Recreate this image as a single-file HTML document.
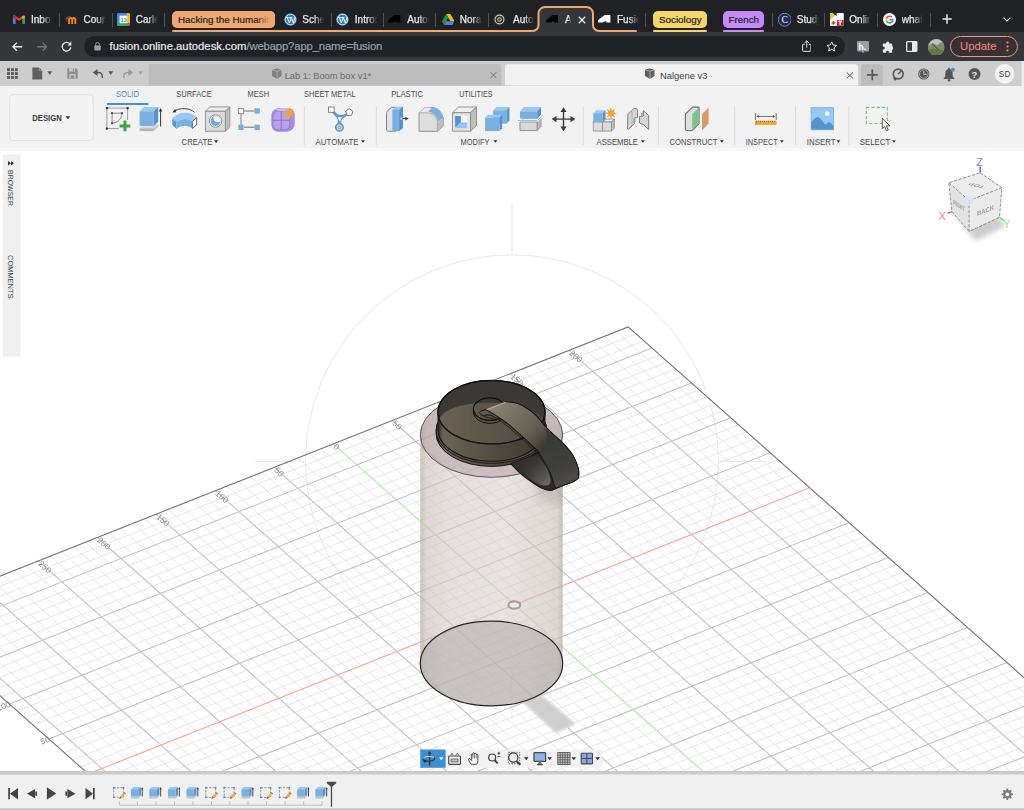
<!DOCTYPE html>
<html lang="en"><head><meta charset="utf-8"><title>Fusion 360 - Nalgene v3</title>
<style>
html,body{margin:0;padding:0;width:1024px;height:810px;overflow:hidden;background:#fff;font-family:"Liberation Sans",sans-serif;}
*{box-sizing:border-box;}
.abs{position:absolute;}
#tabs{position:absolute;left:0;top:0;width:1024px;height:32px;background:#202124;}
#tbar{position:absolute;left:0;top:32px;width:1024px;height:28.900px;background:#35363a;}
#appbar{position:absolute;left:0;top:60.900px;width:1021.500px;height:24.700px;background:#cdcdcd;}
#ribbon{position:absolute;left:0;top:85.600px;width:1024px;height:62.400px;background:#f2f2f2;}
#canvas{position:absolute;left:0;top:149px;width:1024px;height:622px;background:#fff;overflow:hidden;}

.tab{-webkit-text-stroke:.25px #e8eaed;position:absolute;top:0;height:32px;color:#e8eaed;font-size:10px;line-height:39px;white-space:nowrap;overflow:hidden;-webkit-mask-image:linear-gradient(90deg,#000 55%,transparent 100%);mask-image:linear-gradient(90deg,#000 55%,transparent 100%);}
.tsep{position:absolute;top:12.500px;width:1px;height:14px;background:#4d5054;}
.chip{-webkit-text-stroke:.2px #202124;position:absolute;top:10.800px;height:17.200px;border-radius:5px;font-size:9.800px;line-height:17.500px;color:#202124;text-align:center;white-space:nowrap;overflow:hidden;}
.rtab{position:absolute;top:4px;font-size:8.5px;color:#4a4a4a;letter-spacing:-0.2px;white-space:nowrap;transform:translateX(-50%);}
.rlab{position:absolute;top:50px;font-size:8.5px;color:#4a4a4a;letter-spacing:-0.2px;white-space:nowrap;transform:translateX(-50%);}
.rlab:after{content:"";display:inline-block;margin-left:3px;border-left:2.5px solid transparent;border-right:2.5px solid transparent;border-top:3.5px solid #333;vertical-align:middle;position:relative;top:-1px;}
.rsep{position:absolute;top:19px;width:1px;height:39px;background:#dcdcdc;}
.gmin{stroke:#e7e7e7;stroke-width:1;fill:none;}
.gmaj{stroke:#c3c3c3;stroke-width:1.100;fill:none;}
.gedge{stroke:#747474;stroke-width:1.100;fill:none;}
.axr{stroke:#f2a9a3;stroke-width:1.2;fill:none;}
.axg{stroke:#b0eba8;stroke-width:1.2;fill:none;}
.glab{opacity:.99;font-size:8.400px;fill:#8a8a8a;font-family:"Liberation Sans",sans-serif;}
</style></head><body>
<div id="tabs">
 <!-- gmail -->
 <svg class="abs" style="left:13px;top:15px" width="12" height="9" viewBox="0 0 12 9"><path d="M0 1.2V8.2a.8.8 0 0 0 .8.8H2.6V3.6z" fill="#4285f4"/><path d="M12 1.2V8.2a.8.8 0 0 1-.8.8H9.4V3.6z" fill="#34a853"/><path d="M0 1.3A1.2 1.2 0 0 1 2 .4L6 3.5 10 .4A1.2 1.2 0 0 1 12 1.3L9.4 3.6V3.4L6 6 2.6 3.4V3.6z" fill="#ea4335"/><path d="M9.4 1L12 1.3V2.2L9.4 4.3z" fill="#fbbc04"/><path d="M2.6 1L0 1.3V2.2L2.6 4.3z" fill="#c5221f"/></svg>
 <div class="tab" style="left:31px;width:21px">Inbox</div>
 <div class="tsep" style="left:59px"></div>
 <!-- moodle -->
 <svg class="abs" style="left:65px;top:14px" width="13" height="11" viewBox="0 0 13 11"><path d="M4 10V5.6a1.6 1.6 0 0 1 3.2 0V10M7.2 5.6a1.6 1.6 0 0 1 3.2 0V10" fill="none" stroke="#f98012" stroke-width="1.9"/><path d="M0 4.2L4.5 2 6 3 1.5 5.4z" fill="#6b5a45"/><path d="M1.2 5v3" stroke="#6b5a45" stroke-width=".7"/></svg>
 <div class="tab" style="left:83.5px;width:22px">Cours</div>
 <div class="tsep" style="left:111.5px"></div>
 <!-- calendar -->
 <svg class="abs" style="left:117px;top:13px" width="13" height="13" viewBox="0 0 13 13"><rect width="13" height="13" rx="1.6" fill="#4285f4"/><path d="M10 0h1.4A1.6 1.6 0 0 1 13 1.6V10h-3z" fill="#fbbc04"/><path d="M0 10h10v3H1.6A1.6 1.6 0 0 1 0 11.4z" fill="#34a853"/><path d="M10 10h3l-3 3z" fill="#ea4335"/><rect x="2.6" y="2.6" width="7.6" height="7.6" fill="#fff"/><text x="6.4" y="8.7" font-size="6" font-weight="700" text-anchor="middle" fill="#4285f4" font-family="Liberation Sans, sans-serif" letter-spacing="-.4">13</text></svg>
 <div class="tab" style="left:135.8px;width:22px">Carle</div>
 <div class="tsep" style="left:164px"></div>
 <!-- orange group -->
 <div class="chip" style="left:172px;width:103px;background:#f0a871;text-align:left;padding-left:6px">Hacking the Humaniti</div>
 <div class="abs" style="left:256px;top:11px;width:19px;height:17px;border-radius:0 5px 5px 0;background:linear-gradient(90deg,rgba(240,168,113,0),#f0a871 75%)"></div>
 <div class="abs" style="left:172px;top:30px;width:362px;height:2px;background:#f0a871;border-radius:1px 0 0 1px"></div>
 <div class="abs" style="left:598px;top:30px;width:39px;height:2px;background:#f0a871;border-radius:0 1px 1px 0"></div>
 <!-- wordpress 1 -->
 <svg class="abs wp" style="left:283.5px;top:13px" width="13" height="13" viewBox="0 0 13 13"><circle cx="6.5" cy="6.5" r="6.2" fill="#2f7fb5"/><circle cx="6.5" cy="6.5" r="5.3" fill="none" stroke="#fff" stroke-width=".8"/><path d="M2.2 4.4h2.4M3.3 4.4l2.1 5.6 1.2-3.6L5.8 4.4h2.6M7.3 4.4l2 5.6 1.3-4.2c.2-.8-.1-1.4-.5-1.4" fill="none" stroke="#fff" stroke-width="1"/></svg>
 <div class="tab" style="left:302.3px;width:22px">Sched</div>
 <div class="tsep" style="left:330.5px"></div>
 <svg class="abs wp" style="left:336px;top:13px" width="13" height="13" viewBox="0 0 13 13"><circle cx="6.5" cy="6.5" r="6.2" fill="#2f7fb5"/><circle cx="6.5" cy="6.5" r="5.3" fill="none" stroke="#fff" stroke-width=".8"/><path d="M2.2 4.4h2.4M3.3 4.4l2.1 5.6 1.2-3.6L5.8 4.4h2.6M7.3 4.4l2 5.6 1.3-4.2c.2-.8-.1-1.4-.5-1.4" fill="none" stroke="#fff" stroke-width="1"/></svg>
 <div class="tab" style="left:354.8px;width:23px">Intro:</div>
 <div class="tsep" style="left:382.8px"></div>
 <!-- autodesk black -->
 <svg class="abs" style="left:388.300px;top:15.100px" width="12.400" height="7.600" viewBox="0 0 12.400 7.600"><path d="M0 7.600V5.300L6.600 0H12.400V7.600H8.200V5.900L4.700 7.600Z" fill="#000"/></svg>
 <div class="tab" style="left:407.3px;width:22px">Autoc</div>
 <div class="tsep" style="left:435.3px"></div>
 <!-- drive -->
 <svg class="abs" style="left:441.5px;top:14px" width="12.5" height="11" viewBox="0 0 12.5 11"><path d="M4.2 0h4.1l4.2 7.2H8.4z" fill="#fbbc04"/><path d="M4.2 0L0 7.2 2.1 11 6.2 3.6z" fill="#0f9d58"/><path d="M4.2 7.2h8.3L10.4 11H2.1z" fill="#4285f4"/><path d="M4.2 7.2L2.1 11H3.4L5.5 7.2z" fill="#ea4335"/></svg>
 <div class="tab" style="left:459.8px;width:22px">Nora</div>
 <div class="tsep" style="left:487.8px"></div>
 <!-- seal -->
 <svg class="abs" style="left:493px;top:13px" width="13" height="13" viewBox="0 0 13 13"><circle cx="6.5" cy="6.5" r="6.3" fill="#1f2a55"/><circle cx="6.5" cy="6.5" r="4.4" fill="none" stroke="#e9cf6a" stroke-width="1.1"/><circle cx="6.5" cy="6.5" r="2.2" fill="#e9cf6a"/><circle cx="6.5" cy="6.5" r="1.2" fill="#1f2a55"/></svg>
 <div class="tab" style="left:513px;width:21px">Autoc</div>
 <!-- active tab -->
 <svg class="abs" style="left:528px;top:4px" width="76" height="28" viewBox="0 0 76 28"><path d="M4.5 27a6 6 0 0 0 6-6V9.5a6.5 6.5 0 0 1 6.5-6.5H58.5a6.5 6.5 0 0 1 6.500 6.5V21a6 6 0 0 0 6 6V28H4.5z" fill="#35363a"/><path d="M6 27H4.500a6 6 0 0 0 6-6V9.5a6.500 6.500 0 0 1 6.500-6.500H58.500a6.500 6.500 0 0 1 6.500 6.500V21a6 6 0 0 0 6 6H70" fill="none" stroke="#f0a871" stroke-width="2"/></svg>
 <svg class="abs" style="left:545.800px;top:15.100px" width="12.400" height="7.600" viewBox="0 0 12.400 7.600"><path d="M0 7.600V5.300L6.600 0H12.400V7.600H8.200V5.900L4.700 7.600Z" fill="#000"/></svg>
 <div class="tab" style="left:565px;width:6px">A</div>
 <svg class="abs" style="left:577.500px;top:15.500px" width="8" height="8" viewBox="0 0 8 8"><path d="M.8.800L7.200 7.200M7.200.800L.8 7.200" stroke="#e8eaed" stroke-width="1.300"/></svg>
 <!-- fusion tab -->
 <svg class="abs" style="left:598.300px;top:15.100px" width="12.400" height="7.600" viewBox="0 0 12.400 7.600"><path d="M0 7.600V5.300L6.600 0H12.400V7.600H8.200V5.900L4.700 7.600Z" fill="#fff"/></svg>
 <div class="tab" style="left:617px;width:22px">Fusio</div>
 <div class="tsep" style="left:645.300px"></div>
 <div class="chip" style="left:653.300px;width:54px;background:#f6d56c">Sociology</div>
 <div class="abs" style="left:653.300px;top:30px;width:54px;height:2px;background:#f6d56c;border-radius:1px"></div>
 <div class="chip" style="left:723.300px;width:41px;background:#c48af5">French</div>
 <div class="abs" style="left:723.300px;top:30px;width:41px;height:2px;background:#c48af5;border-radius:1px"></div>
 <div class="tsep" style="left:772.300px"></div>
 <!-- C -->
 <svg class="abs" style="left:777.500px;top:13px" width="13.500" height="13.500" viewBox="0 0 14 14"><circle cx="7" cy="7" r="6.700" fill="#1c2a5e" stroke="#c9cfe6" stroke-width=".6"/><text x="7" y="10.300" font-size="10" text-anchor="middle" fill="#fff" font-family="Liberation Serif, serif">C</text></svg>
 <div class="tab" style="left:796.800px;width:22px">Study</div>
 <div class="tsep" style="left:824.300px"></div>
 <!-- flag -->
 <svg class="abs" style="left:830px;top:13px" width="13.500" height="13" viewBox="0 0 14 13"><rect width="14" height="13" fill="#fff"/><path d="M0 0H7L0 7z" fill="#f3c125"/><path d="M7 0L0 7V0z" fill="#f3c125"/><path d="M3 0h4v3z" fill="#000"/><rect x="7" y="0" width="7" height="7" fill="#fff"/><path d="M7 7h7v6H7z" fill="#c8252c"/><path d="M0 7h7v6H0z" fill="#fff"/><path d="M8.500 8.500h4M10.500 7.500v4.500" stroke="#fff" stroke-width="1.400"/><path d="M1.500 10h4M3.500 8v4" stroke="#c8252c" stroke-width="1.400"/></svg>
 <div class="tab" style="left:849.300px;width:22px">Onlin</div>
 <div class="tsep" style="left:877.300px"></div>
 <!-- google -->
 <svg class="abs" style="left:883px;top:13px" width="13" height="13" viewBox="0 0 13 13"><circle cx="6.500" cy="6.500" r="6.500" fill="#fff"/><path d="M10.600 6.600c0-.3 0-.6-.1-.9H6.600v1.700h2.200c-.1.500-.4 1-.8 1.300v1.100h1.300c.8-.7 1.300-1.800 1.300-3.200z" fill="#4285f4"/><path d="M6.600 10.700c1.100 0 2-.4 2.700-1l-1.300-1c-.4.200-.8.400-1.400.4-1.100 0-2-.7-2.300-1.700H2.900v1.100c.7 1.300 2.100 2.200 3.700 2.200z" fill="#34a853"/><path d="M4.300 7.400c-.1-.3-.1-.5-.1-.8s0-.6.100-.8V4.700H2.900c-.3.600-.4 1.200-.4 1.900s.2 1.300.4 1.900z" fill="#fbbc04"/><path d="M6.600 4.100c.6 0 1.100.2 1.600.6l1.200-1.200c-.7-.7-1.700-1.100-2.800-1.100-1.600 0-3 .9-3.700 2.300l1.400 1.100c.3-1 1.200-1.700 2.300-1.700z" fill="#ea4335"/></svg>
 <div class="tab" style="left:901.800px;width:21px">what</div>
 <div class="tsep" style="left:929.800px"></div>
 <svg class="abs" style="left:942px;top:13.500px" width="10" height="10" viewBox="0 0 10 10"><path d="M5 .3V9.700M.3 5H9.700" stroke="#e8eaed" stroke-width="1.500"/></svg>
 <svg class="abs" style="left:1003px;top:16.500px" width="8" height="5" viewBox="0 0 8 5"><path d="M.6.600L4 4 7.400.600" fill="none" stroke="#e8eaed" stroke-width="1.200"/></svg>
</div>
<div id="tbar">
 <!-- back / forward / reload -->
 <svg class="abs" style="left:12px;top:9.500px" width="10.500" height="9.500" viewBox="0 0 10.500 9.500"><path d="M10.200 4.750H1M4.900.700L.9 4.750 4.900 8.800" fill="none" stroke="#e8eaed" stroke-width="1.300"/></svg>
 <svg class="abs" style="left:36.700px;top:9.500px" width="10.500" height="9.500" viewBox="0 0 10.500 9.500"><path d="M.3 4.750H9.500M5.600.700L9.600 4.750 5.600 8.800" fill="none" stroke="#73767b" stroke-width="1.300"/></svg>
 <svg class="abs" style="left:61px;top:9px" width="11" height="11" viewBox="0 0 11 11"><path d="M9.300 3.600A4.300 4.300 0 1 0 9.800 6.400" fill="none" stroke="#e8eaed" stroke-width="1.300"/><path d="M10.300.600V4.400H6.500z" fill="#e8eaed"/></svg>
 <div class="abs" style="left:83.500px;top:3.700px;width:761.500px;height:21px;border-radius:10.500px;background:#202124"></div>
 <!-- lock -->
 <svg class="abs" style="left:93.700px;top:10.200px" width="7" height="8.600" viewBox="0 0 7 8.600"><path d="M1.600 3.800V2.500a1.900 1.900 0 0 1 3.800 0V3.800" fill="none" stroke="#9aa0a6" stroke-width="1"/><rect x=".3" y="3.600" width="6.400" height="4.800" rx=".7" fill="#9aa0a6"/></svg>
 <div id="url" class="abs" style="-webkit-text-stroke:.2px;left:109.500px;top:3.700px;height:21px;line-height:21.500px;font-size:11.300px;color:#e8eaed;white-space:nowrap">fusion.online.autodesk.com<span style="color:#9aa0a6;letter-spacing:-.145px">/webapp?app_name=fusion</span></div>
 <!-- share -->
 <svg class="abs" style="left:801.500px;top:8.300px" width="9.500" height="12" viewBox="0 0 9.500 12"><path d="M2.800 4.300H1.300a.7.700 0 0 0-.7.700V10.600a.7.700 0 0 0 .7.700H8.200a.7.700 0 0 0 .7-.7V5a.7.700 0 0 0-.7-.7H6.700M4.750 7.600V.9M2.600 2.900L4.750.800 6.900 2.900" fill="none" stroke="#e8eaed" stroke-width="1"/></svg>
 <!-- star -->
 <svg class="abs" style="left:825.700px;top:8.700px" width="11.400" height="11" viewBox="0 0 11.400 11"><path d="M5.700.900L7.150 4 10.500 4.400 8 6.700 8.700 10 5.700 8.300 2.700 10 3.400 6.700.9 4.400 4.250 4z" fill="none" stroke="#e8eaed" stroke-width="1" stroke-linejoin="round"/></svg>
 <!-- h. -->
 <svg class="abs" style="left:856.500px;top:8.500px" width="12" height="13" viewBox="0 0 12 13"><path d="M1.200 0H10.800A1.200 1.200 0 0 1 12 1.200V9.300a1.200 1.200 0 0 1-1.200 1.200H7.300L6 12.500 4.700 10.500H1.200A1.200 1.200 0 0 1 0 9.300V1.200A1.200 1.200 0 0 1 1.200 0z" fill="#9a9da2"/><text x="5.300" y="8.600" font-size="8.500" font-weight="700" text-anchor="middle" fill="#fff" font-family="Liberation Sans, sans-serif">h.</text></svg>
 <!-- puzzle -->
 <svg class="abs" style="left:881.500px;top:8.500px" width="11.500" height="12" viewBox="0 0 11.500 12"><path d="M4.200 1.900a1.500 1.500 0 0 1 3 0V2.600H9.300a.8.800 0 0 1 .8.800V5.500h.3a1.500 1.500 0 0 1 0 3H10.100v2.400a.8.800 0 0 1-.8.800H6.900v-.5a1.400 1.400 0 0 0-2.800 0v.5H1.600a.8.800 0 0 1-.8-.800V8.600h.5a1.500 1.500 0 0 0 0-3H.8V3.400a.8.800 0 0 1 .8-.800H4.200z" fill="#e8eaed"/></svg>
 <!-- side panel -->
 <svg class="abs" style="left:906px;top:9px" width="11.500" height="11" viewBox="0 0 11.500 11"><rect x=".65" y=".65" width="10.200" height="9.700" rx=".8" fill="none" stroke="#e8eaed" stroke-width="1.300"/><rect x="6" y=".65" width="4.850" height="9.700" fill="#e8eaed"/></svg>
 <!-- avatar -->
 <svg class="abs" style="left:928px;top:6.500px" width="16.500" height="16.500" viewBox="0 0 16.500 16.500"><defs><clipPath id="avc"><circle cx="8.250" cy="8.250" r="8.250"/></clipPath></defs><g clip-path="url(#avc)"><rect width="16.500" height="16.500" fill="#b9c3c9"/><path d="M0 7L5 4 9 6.500 13 3 16.500 5V16.500H0z" fill="#7f8f6c"/><path d="M0 10.500C4 9 10 9.500 16.500 11.500V16.500H0z" fill="#5f7a3a"/><path d="M4 5L11 11" stroke="#6b5a4a" stroke-width="1.200"/></g></svg>
 <!-- update -->
 <div class="abs" style="left:950px;top:3.700px;width:67.500px;height:21.300px;border-radius:10.700px;border:1px solid #e8988e;background:#3a3032"></div>
 <div class="abs" style="left:960px;top:3.700px;height:21.300px;line-height:21.500px;font-size:11.300px;color:#f28b82;white-space:nowrap">Update</div>
 <svg class="abs" style="left:1005.500px;top:9px" width="3" height="11" viewBox="0 0 3 11"><circle cx="1.500" cy="1.500" r="1.100" fill="#f28b82"/><circle cx="1.500" cy="5.500" r="1.100" fill="#f28b82"/><circle cx="1.500" cy="9.500" r="1.100" fill="#f28b82"/></svg>
</div>
<div id="appbar"></div>
<div id="ribbon"></div>
<svg class="abs" style="left:0;top:61px;font-family:'Liberation Sans',sans-serif" width="1024" height="90" viewBox="0 61 1024 90">
<rect x="1021.500" y="60.900" width="2.500" height="24.700" fill="#ececec"/>
<rect x="7.1" y="68.2" width="2.900" height="2.900" fill="#5a5a5a"/>
<rect x="7.1" y="72.1" width="2.900" height="2.900" fill="#5a5a5a"/>
<rect x="7.1" y="76.0" width="2.900" height="2.900" fill="#5a5a5a"/>
<rect x="11.0" y="68.2" width="2.900" height="2.900" fill="#5a5a5a"/>
<rect x="11.0" y="72.1" width="2.900" height="2.900" fill="#5a5a5a"/>
<rect x="11.0" y="76.0" width="2.900" height="2.900" fill="#5a5a5a"/>
<rect x="14.9" y="68.2" width="2.900" height="2.900" fill="#5a5a5a"/>
<rect x="14.9" y="72.1" width="2.900" height="2.900" fill="#5a5a5a"/>
<rect x="14.9" y="76.0" width="2.900" height="2.900" fill="#5a5a5a"/>
<path d="M32.400 67.600H39.200L42.200 70.700V79.500H32.400Z" fill="#5f5f5f"/><path d="M39.200 67.600V70.700H42.200" fill="none" stroke="#cdcdcd" stroke-width=".6"/>
<path d="M47.300 71.300H52.300L49.800 74.900Z" fill="#5a5a5a"/>
<path d="M67.300 68.200H76.200L77.700 69.700V78.700H67.300Z" fill="#8d8d8d"/><rect x="69.300" y="68.200" width="5.800" height="3.300" fill="#cdcdcd"/><rect x="72.800" y="68.800" width="1.400" height="2.100" fill="#8d8d8d"/><rect x="69.500" y="74" width="6" height="4.700" fill="#cdcdcd"/><rect x="70.700" y="75.300" width="3.600" height="3.400" fill="#8d8d8d"/>
<path d="M94.200 72.500H98.500C101.500 72.500 102.600 74.500 102.300 78" fill="none" stroke="#555" stroke-width="1.400"/><path d="M92.800 72.500L97.500 69V76Z" fill="#555"/>
<path d="M108.300 71.300H113.300L110.800 74.900Z" fill="#555"/>
<path d="M131.500 72.500H127.700C124.700 72.500 123.600 74.500 123.900 78" fill="none" stroke="#999" stroke-width="1.400"/><path d="M133.100 72.500L128.400 69V76Z" fill="#999"/>
<path d="M138.300 71.300H143L140.650 74.900Z" fill="#a0a0a0"/>
<path d="M148.600 85.600V66.400A2.500 2.500 0 0 1 151.100 63.900H498.800A2.500 2.500 0 0 1 501.300 66.400V85.600Z" fill="#bdbdbd"/>
<path d="M272 69.800L276.500 68.500L281.500 69.800V76L277 79L272 76Z" fill="#808080"/><path d="M272 69.800L277 71.200L281.500 69.800M277 71.200V79" fill="none" stroke="#c9c9c9" stroke-width=".6"/>
<text x="284.700" y="78.500" textLength="86.500" lengthAdjust="spacingAndGlyphs" font-size="9.300" fill="#6a6a6a">Lab 1: Boom box v1*</text>
<path d="M490.500 72.200L496.300 78M496.300 72.200L490.500 78" stroke="#777" stroke-width="1" fill="none"/>
<path d="M505 85.600V66.800A2.500 2.500 0 0 1 507.500 64.300H855.700A2.500 2.500 0 0 1 858.200 66.800V85.600Z" fill="#f2f2f2"/>
<path d="M645 69.800L649.500 68.500L654.500 69.800V76L650 79L645 76Z" fill="#606060"/><path d="M645 69.800L650 71.200L654.500 69.800M650 71.200V79" fill="none" stroke="#d8d8d8" stroke-width=".6"/>
<text x="660" y="78.500" textLength="47.500" lengthAdjust="spacingAndGlyphs" font-size="9.300" fill="#3d3d3d">Nalgene v3</text>
<path d="M846.700 72.300L853.100 78.500M853.100 72.300L846.700 78.500" stroke="#555" stroke-width="1" fill="none"/>
<path d="M861.100 85.600V66.800A2.500 2.500 0 0 1 863.600 64.300H880.100A2.500 2.500 0 0 1 882.600 66.800V85.600Z" fill="#bcbcbc"/><path d="M872.300 69.500V80.200M867 74.850H877.700" stroke="#555" stroke-width="1.700"/>
<circle cx="898.200" cy="74" r="4.900" fill="none" stroke="#555" stroke-width="1.700"/><path d="M898.200 74L901.800 70.200" stroke="#555" stroke-width="1.500"/><path d="M893 77.500L897.500 78.500L894.800 81Z" fill="#555"/>
<circle cx="923.800" cy="74" r="5.600" fill="#555"/><circle cx="923.800" cy="74" r="4.300" fill="#555" stroke="#cdcdcd" stroke-width=".7"/><path d="M923.800 71V74.300H926.500" fill="none" stroke="#cdcdcd" stroke-width="1"/>
<path d="M949 69C946.500 69 945.300 71 945.300 73.500V76.500L943.700 78.300V79H954.300V78.300L952.700 76.500V73.500C952.700 71 951.500 69 949 69Z" fill="#555"/><circle cx="949" cy="80.300" r="1.200" fill="#555"/><circle cx="949" cy="68.500" r=".9" fill="#555"/><circle cx="952.900" cy="69.800" r="2" fill="#3b93d3"/>
<circle cx="974.500" cy="74" r="6" fill="#555"/><text x="974.500" y="77.500" font-size="9.500" font-weight="700" text-anchor="middle" fill="#ececec">?</text>
<circle cx="1004.700" cy="73.900" r="9.800" fill="#f4f4f4"/><text x="1004.700" y="76.900" font-size="8.200" text-anchor="middle" fill="#444" letter-spacing=".3">SD</text>
<rect x="0" y="148" width="1024" height="3.200" fill="#f9f9f9"/>
<text x="116.0" y="97.4" textLength="23.0" lengthAdjust="spacingAndGlyphs" font-size="8.2" fill="#3f97d6">SOLID</text>
<rect x="106.8" y="103.100" width="41.600" height="1.900" rx=".6" fill="#3b93d3"/>
<text x="176.2" y="97.4" textLength="35.5" lengthAdjust="spacingAndGlyphs" font-size="8.2" fill="#4b4b4b">SURFACE</text>
<text x="247.5" y="97.4" textLength="21.5" lengthAdjust="spacingAndGlyphs" font-size="8.2" fill="#4b4b4b">MESH</text>
<text x="303.9" y="97.4" textLength="51.8" lengthAdjust="spacingAndGlyphs" font-size="8.2" fill="#4b4b4b">SHEET METAL</text>
<text x="391.2" y="97.4" textLength="31.8" lengthAdjust="spacingAndGlyphs" font-size="8.2" fill="#4b4b4b">PLASTIC</text>
<text x="459.2" y="97.4" textLength="33.2" lengthAdjust="spacingAndGlyphs" font-size="8.2" fill="#4b4b4b">UTILITIES</text>
<text x="181.6" y="144.6" textLength="30.7" lengthAdjust="spacingAndGlyphs" font-size="8.2" fill="#4b4b4b">CREATE</text>
<path d="M213.9 140.3H218.2L216.1 143.0Z" fill="#333"/>
<text x="315.6" y="144.6" textLength="43.0" lengthAdjust="spacingAndGlyphs" font-size="8.2" fill="#4b4b4b">AUTOMATE</text>
<path d="M361.0 140.3H365.0L363.0 142.8Z" fill="#333"/>
<text x="460.5" y="144.6" textLength="29.0" lengthAdjust="spacingAndGlyphs" font-size="8.2" fill="#4b4b4b">MODIFY</text>
<path d="M493.4 140.3H497.3L495.4 142.7Z" fill="#333"/>
<text x="596.6" y="144.6" textLength="41.4" lengthAdjust="spacingAndGlyphs" font-size="8.2" fill="#4b4b4b">ASSEMBLE</text>
<path d="M640.9 140.3H644.8L642.8 142.7Z" fill="#333"/>
<text x="669.5" y="144.6" textLength="47.9" lengthAdjust="spacingAndGlyphs" font-size="8.2" fill="#4b4b4b">CONSTRUCT</text>
<path d="M719.9 140.3H723.8L721.8 142.7Z" fill="#333"/>
<text x="745.7" y="144.6" textLength="32.2" lengthAdjust="spacingAndGlyphs" font-size="8.2" fill="#4b4b4b">INSPECT</text>
<path d="M779.9 140.3H783.8L781.8 142.7Z" fill="#333"/>
<text x="806.8" y="144.6" textLength="28.7" lengthAdjust="spacingAndGlyphs" font-size="8.2" fill="#4b4b4b">INSERT</text>
<path d="M836.5 140.3H840.4L838.5 142.7Z" fill="#333"/>
<text x="859.7" y="144.6" textLength="30.7" lengthAdjust="spacingAndGlyphs" font-size="8.2" fill="#4b4b4b">SELECT</text>
<path d="M892.0 140.3H895.9L894.0 142.7Z" fill="#333"/>
<rect x="303.8" y="106.500" width="1.100" height="38.500" fill="#dedede"/>
<rect x="375.8" y="106.500" width="1.100" height="38.500" fill="#dedede"/>
<rect x="582.8" y="106.500" width="1.100" height="38.500" fill="#dedede"/>
<rect x="657.9" y="106.500" width="1.100" height="38.500" fill="#dedede"/>
<rect x="734.1" y="106.500" width="1.100" height="38.500" fill="#dedede"/>
<rect x="795.0" y="106.500" width="1.100" height="38.500" fill="#dedede"/>
<rect x="848.3" y="106.500" width="1.100" height="38.500" fill="#dedede"/>
<rect x="9.700" y="94.600" width="83.500" height="46" rx="3.500" fill="#f3f3f3" stroke="#e1e1e1" stroke-width="1"/>
<text x="32.3" y="120.8" textLength="29.4" lengthAdjust="spacingAndGlyphs" font-size="8.2" fill="#3a3a3a" font-weight="700">DESIGN</text>
<path d="M65.5 116.3H70.3L67.9 119.3Z" fill="#333"/>
<path d="M106.900 108.050H127.600M106.900 108.050V128.600M127.600 108.050V120M106.900 128.600H119" stroke="#9b9b9b" stroke-width="1" fill="none"/>
<rect x="105.8" y="107.0" width="2.200" height="2.200" fill="#3c3c3c"/>
<rect x="126.5" y="107.0" width="2.200" height="2.200" fill="#3c3c3c"/>
<rect x="105.8" y="127.5" width="2.200" height="2.200" fill="#3c3c3c"/>
<path d="M112.100 113.200H122M112.100 113.200V123.300M122 113.200C121.500 119 118 122.800 112.100 123.300" stroke="#8a8a8a" stroke-width="1" fill="none"/>
<rect x="111.1" y="112.2" width="1.900" height="1.900" fill="#444"/>
<rect x="121.0" y="112.2" width="1.900" height="1.900" fill="#444"/>
<rect x="111.1" y="122.3" width="1.900" height="1.900" fill="#444"/>
<path d="M124.950 120.500V131.300M119.550 125.900H130.350" stroke="#3fa447" stroke-width="3" fill="none"/>
<path d="M139.6 128.3L144.0 124.1L158.2 124.1L153.8 128.3Z" fill="#dadada"/><path d="M153.8 128.3L158.2 124.1L158.2 126.9L153.8 131.1Z" fill="#c4c4c4"/><path d="M139.6 128.3L153.8 128.3L153.8 131.1L139.6 131.1Z" fill="#b4b4b4"/>
<path d="M139.6 111.3L144.0 107.1L158.2 107.1L153.8 111.3Z" fill="#97c9f5"/><path d="M153.8 111.3L158.2 107.1L158.2 121.7L153.8 125.9Z" fill="#5792cb"/><path d="M139.6 111.3L153.8 111.3L153.8 125.9L139.6 125.9Z" fill="#79afe1"/>
<path d="M160.600 110.500V126.400" stroke="#333" stroke-width="1"/><path d="M158.900 111.500L160.600 108L162.300 111.500Z" fill="#333"/>
<path d="M172.300 118.300C178 111.500 190 110.800 196.400 117.200L192.300 121.500C187.500 117.800 181 118.400 176.500 122.600Z" fill="#97c9f5"/>
<path d="M172.300 118.300L176.500 122.600V129L172.300 124.500Z" fill="#5792cb"/>
<path d="M176.500 122.600C181 118.400 187.500 117.800 192.300 121.500V128.300C187.500 124.600 181 125 176.500 129Z" fill="#79afe1"/>
<path d="M192.300 121.500L196.700 117.500V124.800L192.300 128.400Z" fill="#fff" stroke="#555" stroke-width=".9" stroke-linejoin="round"/>
<path d="M194.500 112.300C189 107.500 179.500 107.500 173.500 111.500" fill="none" stroke="#333" stroke-width=".9"/><path d="M172.300 112.500L175.200 108.900L176.300 112.300Z" fill="#333"/>
<path d="M205.4 111.3L209.8 106.9L229.8 106.9L225.4 111.3Z" fill="#ececec" stroke="#8c8c8c" stroke-width="0.9" stroke-linejoin="round"/><path d="M225.4 111.3L229.8 106.9L229.8 126.9L225.4 131.3Z" fill="#bdbdbd" stroke="#8c8c8c" stroke-width="0.9" stroke-linejoin="round"/><path d="M205.4 111.3L225.4 111.3L225.4 131.3L205.4 131.3Z" fill="#dcdcdc" stroke="#8c8c8c" stroke-width="0.9" stroke-linejoin="round"/>
<circle cx="215.600" cy="121" r="6.300" fill="#e9e9e9" stroke="#8f8f8f" stroke-width=".9"/><circle cx="215.600" cy="121" r="4.900" fill="#6ea8de"/><path d="M213.500 116.700A4.900 4.900 0 0 1 220.500 121.500A4.600 4.600 0 0 1 213.500 116.700Z" fill="#fff"/>
<path d="M243.800 111H254.500M241 113.700V124.700M243.800 127.250H254.500" stroke="#9a9a9a" stroke-width="1.300" fill="none"/>
<rect x="238.500" y="108.500" width="5.200" height="5.200" fill="#fff" stroke="#8a8a8a" stroke-width=".9"/>
<rect x="254.5" y="108.3" width="5.300" height="5.300" fill="#70b0e6"/>
<rect x="238.3" y="124.7" width="5.300" height="5.300" fill="#70b0e6"/>
<rect x="254.5" y="124.7" width="5.300" height="5.300" fill="#70b0e6"/>
<path d="M271.300 116C271.300 111 275 108 280 108H287C292 108 294.700 111 294.700 116V124C294.700 128.500 291 131.800 285 131.800H279C274 131.800 271.300 128.500 271.300 124Z" fill="#a78bde"/>
<path d="M273 116.500C273 113 276 110.800 280 110.800H286.500C288.500 110.800 289.700 111.500 289.700 113V126C289.700 128.500 287 129.800 284 129.800H279C275 129.800 273 127.800 273 124.500Z" fill="#b9a1ea" stroke="#8d72c9" stroke-width=".7"/>
<path d="M281.300 111V129.700M273 120.300H289.700" stroke="#8566c4" stroke-width=".8" fill="none"/>
<path d="M275 109.500C279 107.500 288 107.500 291 109L288.500 111H279Z" fill="#cbb9f2"/>
<path d="M289.4 107.0L290.5 110.6L293.8 108.8L292.0 112.1L295.6 113.2L292.0 114.3L293.8 117.6L290.5 115.8L289.4 119.4L288.3 115.8L285.0 117.6L286.8 114.3L283.2 113.2L286.8 112.1L285.0 108.8L288.3 110.6Z" fill="#f0a234"/>
<path d="M331.500 110L339.600 118.800L348.500 113.300M339.600 118.800V125" stroke="#5b9bd5" stroke-width="2.600" fill="none" stroke-linecap="round"/>
<path d="M334 111.500C336 115 343 116 347 113.500L341.300 120V124H337.800V120Z" fill="#5b9bd5"/><path d="M337.600 117.200H342L339.800 121.800Z" fill="#f2f2f2"/>
<rect x="328.500" y="107" width="5.600" height="5.300" fill="#fff" stroke="#7a7a7a" stroke-width=".9"/>
<path d="M349.300 108.600L352.900 111.200L351.500 115.400H347.100L345.700 111.200Z" fill="#fff" stroke="#6a6a6a" stroke-width=".9" stroke-linejoin="round"/>
<circle cx="339.500" cy="127.400" r="3.700" fill="#d5d5d5" stroke="#5b9bd5" stroke-width="1.700"/><circle cx="339.500" cy="127.400" r="1.400" fill="none" stroke="#8a8a8a" stroke-width=".7"/>
<path d="M392.800 131.200H388.200C387 131.200 386.500 130.700 386.500 129.500V113.500C386.500 112 387 111.300 388 110.300L391.500 107.300H396V131.200Z" fill="#e3e3e3" stroke="#7d7d7d" stroke-width="1"/>
<path d="M392.3 109.8L396.2 106.6L403.0 106.6L399.1 109.8Z" fill="#97c9f5"/><path d="M399.1 109.8L403.0 106.6L403.0 127.9L399.1 131.1Z" fill="#5792cb"/><path d="M392.3 109.8L399.1 109.8L399.1 131.1L392.3 131.1Z" fill="#79afe1"/>
<path d="M401.300 118.600H406" stroke="#333" stroke-width="1"/><path d="M405.300 116.800L408.600 118.600L405.300 120.400Z" fill="#333"/><rect x="400.500" y="117.700" width="2" height="1.800" fill="#e8e8e8"/>
<path d="M419.200 112.800L424.500 107.500H433L443.200 117.500V126L437.300 131.200H419.200Z" fill="#dcdcdc" stroke="#888" stroke-width="1" stroke-linejoin="round"/>
<path d="M419.200 112.800L424.500 107.500H431L428 111.300C425 112.300 421 112.800 419.200 112.800Z" fill="#ececec"/>
<path d="M437.300 131.200L443.200 126V118L437.300 122.800Z" fill="#bdbdbd"/>
<path d="M428.200 111.500L433.300 106.900C438.500 108 442.500 112 443.200 117.200L438 121.800C437.500 116.500 434 112.500 428.200 111.500Z" fill="#79afe1"/>
<path d="M419.200 112.800H428C433.500 113.500 437.300 117 437.300 122.800V131.200H419.200Z" fill="#dedede" stroke="#8a8a8a" stroke-width=".6"/>
<path d="M452.5 112.7L458.5 107.0L476.5 107.0L470.5 112.7Z" fill="#efefef" stroke="#8a8a8a" stroke-width="0.9" stroke-linejoin="round"/><path d="M470.5 112.7L476.5 107.0L476.5 125.5L470.5 131.2Z" fill="#bebebe" stroke="#8a8a8a" stroke-width="0.9" stroke-linejoin="round"/><path d="M452.5 112.7L470.5 112.7L470.5 131.2L452.5 131.2Z" fill="#e4e4e4" stroke="#8a8a8a" stroke-width="0.9" stroke-linejoin="round"/>
<rect x="455.100" y="115.700" width="12" height="12.500" fill="#f6f6f6"/>
<path d="M455.100 116.100H460.800V122.500L455.100 127.900Z" fill="#5792cb"/><path d="M455.100 128.200L460.800 122.500H467.100V128.200Z" fill="#8fc4f5"/>
<path d="M493.2 110.3L496.2 107.1L509.4 107.1L506.4 110.3Z" fill="#97c9f5"/><path d="M506.4 110.3L509.4 107.1L509.4 120.5L506.4 123.7Z" fill="#5792cb"/><path d="M493.2 110.3L506.4 110.3L506.4 123.7L493.2 123.7Z" fill="#79afe1"/>
<path d="M485.1 117.6L487.7 114.7L502.1 114.7L499.5 117.6Z" fill="#97c9f5"/><path d="M499.5 117.6L502.1 114.7L502.1 128.2L499.5 131.1Z" fill="#5792cb"/><path d="M485.1 117.6L499.5 117.6L499.5 131.1L485.1 131.1Z" fill="#79afe1"/>
<path d="M520.0 122.0L523.9 118.0L541.0 118.0L537.1 122.0Z" fill="#e6e6e6" stroke="#8a8a8a" stroke-width="0.9" stroke-linejoin="round"/><path d="M537.1 122.0L541.0 118.0L541.0 126.5L537.1 130.5Z" fill="#bcbcbc" stroke="#8a8a8a" stroke-width="0.9" stroke-linejoin="round"/><path d="M520.0 122.0L537.1 122.0L537.1 130.5L520.0 130.5Z" fill="#d9d9d9" stroke="#8a8a8a" stroke-width="0.9" stroke-linejoin="round"/>
<path d="M520.0 111.3L523.9 107.1L541.0 107.1L537.1 111.3Z" fill="#97c9f5"/><path d="M537.1 111.3L541.0 107.1L541.0 114.4L537.1 118.6Z" fill="#5792cb"/><path d="M520.0 111.3L537.1 111.3L537.1 118.6L520.0 118.6Z" fill="#79afe1"/>
<path d="M518 120.500H537.600L542.500 115.200" fill="none" stroke="#fff" stroke-width="2.200"/><path d="M518 120.500H537.600L542.500 115.200" fill="none" stroke="#8ec3f2" stroke-width="1"/>
<path d="M563.500 110V128.500M554.500 119.100H572.500" stroke="#3a3a3a" stroke-width="1.400"/>
<path d="M563.500 107.300L566.600 112H560.400ZM563.500 131.200L566.600 126.400H560.400ZM551.700 119.100L556.500 116V122.200ZM575.300 119.100L570.500 116V122.200Z" fill="#3a3a3a"/>
<path d="M593.3 122.0L596.2 119.1L605.5 119.1L602.6 122.0Z" fill="#ececec" stroke="#8a8a8a" stroke-width="0.8" stroke-linejoin="round"/><path d="M602.6 122.0L605.5 119.1L605.5 128.2L602.6 131.1Z" fill="#bdbdbd" stroke="#8a8a8a" stroke-width="0.8" stroke-linejoin="round"/><path d="M593.3 122.0L602.6 122.0L602.6 131.1L593.3 131.1Z" fill="#dcdcdc" stroke="#8a8a8a" stroke-width="0.8" stroke-linejoin="round"/>
<path d="M602.6 122.0L605.5 119.1L614.3 119.1L611.4 122.0Z" fill="#ececec" stroke="#8a8a8a" stroke-width="0.8" stroke-linejoin="round"/><path d="M611.4 122.0L614.3 119.1L614.3 128.2L611.4 131.1Z" fill="#bdbdbd" stroke="#8a8a8a" stroke-width="0.8" stroke-linejoin="round"/><path d="M602.6 122.0L611.4 122.0L611.4 131.1L602.6 131.1Z" fill="#dcdcdc" stroke="#8a8a8a" stroke-width="0.8" stroke-linejoin="round"/>
<path d="M593.3 113.2L596.2 110.3L605.5 110.3L602.6 113.2Z" fill="#97c9f5"/><path d="M602.6 113.2L605.5 110.3L605.5 119.1L602.6 122.0Z" fill="#5792cb"/><path d="M593.3 113.2L602.6 113.2L602.6 122.0L593.3 122.0Z" fill="#79afe1"/>
<path d="M610.9 106.9L611.9 110.7L615.4 108.7L613.4 112.2L617.2 113.2L613.4 114.2L615.4 117.7L611.9 115.7L610.9 119.5L609.9 115.7L606.4 117.7L608.4 114.2L604.6 113.2L608.4 112.2L606.4 108.7L609.9 110.7Z" fill="#f0a234"/>
<path d="M627.900 114.500L633.500 108.800C635 107.800 637.600 108.500 637.600 110.500V117.500L634.200 118V124L628.300 129.300C627.800 129.500 627.500 129 627.500 128.500Z" fill="#d6d6d6" stroke="#7d7d7d" stroke-width="1" stroke-linejoin="round"/>
<path d="M632 112V126" stroke="#a5a5a5" stroke-width=".8"/><rect x="633.800" y="118.500" width="1.800" height="3.500" fill="#79afe1"/>
<path d="M643.300 110.500L648.700 115.500V129.500L643.300 124.500L639.500 123V116.500L643.300 116Z" fill="#d6d6d6" stroke="#7d7d7d" stroke-width="1" stroke-linejoin="round"/><rect x="641" y="113.200" width="1.800" height="4" fill="#79afe1"/>
<path d="M685.400 114.200L692.700 107.100H699V123.500L692.200 130.500H686.600C685.800 130.500 685.400 130 685.400 129.300Z" fill="#e0e0e0" stroke="#6b6b6b" stroke-width="1.100" stroke-linejoin="round"/>
<path d="M692.200 114.200L699 107.400V123.500L692.200 130.300Z" fill="#7cc48a"/>
<path d="M702 114.200L708.600 107.400V123.500L702 130.300Z" fill="#d89a68"/>
<rect x="755" y="120.800" width="21.500" height="4.200" fill="#f0a830"/><path d="M756.500 120.800v1.500M758.500 120.800v1M760.500 120.800v1.500M762.500 120.800v1M764.500 120.800v1.500M766.500 120.800v1M768.500 120.800v1.500M770.500 120.800v1M772.500 120.800v1.500M774.500 120.800v1" stroke="#6b4a10" stroke-width=".7"/>
<path d="M755.400 113.200V120M776.200 113.200V120M757 116.450H774.500" stroke="#666" stroke-width=".9"/><path d="M756.200 116.450L758.700 115.200V117.700ZM775.400 116.450L772.900 115.200V117.700Z" fill="#444"/>
<rect x="811.100" y="107.700" width="22.500" height="22.100" fill="#94c8f6" stroke="#74afe6" stroke-width=".8"/>
<path d="M811.300 122.200C813.500 119.500 815.800 117 817.900 117C820.500 117.500 823 122.500 825.700 124.800C827 124 828 122 829.200 122C830.800 122.500 832 124.500 833.400 126V129.600H811.300Z" fill="#5593c9"/>
<circle cx="827.200" cy="113.700" r="2.400" fill="#fbf7c6"/>
<rect x="866.300" y="107.400" width="21" height="16.100" fill="none" stroke="#7dc67f" stroke-width="1.200" stroke-dasharray="3.300 1.900"/>
<path d="M882.300 118.100V128.700L884.700 126.500L886.500 130.700L888.200 130L886.400 125.900H889.800Z" fill="#fff" stroke="#333" stroke-width=".8" stroke-linejoin="round"/>
</svg>
<div id="canvas">
<svg class="abs" style="left:0;top:-149px;font-family:'Liberation Sans',sans-serif" width="1024" height="810" viewBox="0 0 1024 810">
<g stroke="#e9e9e9" stroke-width="1" fill="none"><circle cx="512" cy="461.4" r="206.5"/><path d="M512 203V254.9M512 667.9V719M255 461.4H305.5M718.5 461.4H769"/></g>
<path class="gmin" d="M413.5 1029.4L-67.8 603.1M425.3 1024.8L-56.0 598.4M437.0 1020.1L-44.2 593.7M448.8 1015.4L-32.4 589.0M472.4 1006.0L-8.9 579.7M484.2 1001.4L2.9 575.0M496.0 996.7L14.7 570.3M507.8 992.0L26.5 565.6M531.4 982.6L50.1 556.2M543.2 978.0L61.9 551.6M555.0 973.3L73.7 546.9M566.8 968.6L85.5 542.2M590.4 959.2L109.1 532.9M602.2 954.6L120.9 528.2M614.0 949.9L132.7 523.5M625.8 945.2L144.5 518.8M649.4 935.8L168.1 509.5M661.2 931.2L179.9 504.8M673.0 926.5L191.7 500.1M684.8 921.8L203.5 495.4M708.4 912.4L227.1 486.1M720.2 907.8L238.9 481.4M731.9 903.1L250.7 476.7M743.7 898.4L262.5 472.0M767.3 889.0L286.0 462.7M779.1 884.4L297.8 458.0M790.9 879.7L309.6 453.3M802.7 875.0L321.4 448.6M826.3 865.6L345.0 439.3M838.1 861.0L356.8 434.6M849.9 856.3L368.6 429.9M861.7 851.6L380.4 425.2M885.3 842.2L404.0 415.9M897.1 837.6L415.8 411.2M908.9 832.9L427.6 406.5M920.7 828.2L439.4 401.8M944.3 818.8L463.0 392.5M956.1 814.2L474.8 387.8M967.9 809.5L486.6 383.1M979.7 804.8L498.4 378.4M1003.3 795.4L522.0 369.1M1015.1 790.8L533.8 364.4M1026.8 786.1L545.6 359.7M1038.6 781.4L557.4 355.0M1062.2 772.0L580.9 345.7M1074.0 767.4L592.7 341.0M1085.8 762.7L604.5 336.3M1097.6 758.0L616.3 331.6M388.1 1039.5L1109.4 753.3M380.2 1032.5L1101.5 746.3M372.3 1025.5L1093.6 739.3M356.5 1011.5L1077.9 725.4M348.6 1004.6L1070.0 718.4M340.8 997.6L1062.1 711.4M332.9 990.6L1054.2 704.4M317.1 976.6L1038.4 690.4M309.2 969.6L1030.5 683.4M301.3 962.6L1022.6 676.4M293.4 955.6L1014.7 669.4M277.6 941.6L999.0 655.5M269.7 934.7L991.1 648.5M261.9 927.7L983.2 641.5M254.0 920.7L975.3 634.5M238.2 906.7L959.5 620.5M230.3 899.7L951.6 613.5M222.4 892.7L943.7 606.5M214.5 885.7L935.8 599.5M198.7 871.7L920.1 585.6M190.8 864.8L912.2 578.6M183.0 857.8L904.3 571.6M175.1 850.8L896.4 564.6M159.3 836.8L880.6 550.6M151.4 829.8L872.7 543.6M143.5 822.8L864.8 536.6M135.6 815.8L856.9 529.6M119.8 801.8L841.2 515.7M111.9 794.9L833.3 508.7M104.1 787.9L825.4 501.7M96.2 780.9L817.5 494.7M80.4 766.9L801.7 480.7M72.5 759.9L793.8 473.7M64.6 752.9L785.9 466.7M56.7 745.9L778.0 459.7M40.9 731.9L762.3 445.8M33.0 725.0L754.4 438.8M25.2 718.0L746.5 431.8M17.3 711.0L738.6 424.8M1.5 697.0L722.8 410.8M-6.4 690.0L714.9 403.8M-14.3 683.0L707.0 396.8M-22.2 676.0L699.1 389.8M-38.0 662.0L683.4 375.9M-45.9 655.1L675.5 368.9M-53.7 648.1L667.6 361.9M-61.6 641.1L659.7 354.9M-77.4 627.1L643.9 340.9M-85.3 620.1L636.0 333.9"/>
<path class="gmaj" d="M401.7 1034.1L-79.6 607.7M460.6 1010.7L-20.6 584.3M519.6 987.3L38.3 560.9M578.6 963.9L97.3 537.5M637.6 940.5L156.3 514.1M696.6 917.1L215.3 490.7M755.5 893.7L274.2 467.3M873.5 846.9L392.2 420.5M932.5 823.5L451.2 397.1M991.5 800.1L510.2 373.7M1050.4 776.7L569.1 350.3M364.4 1018.5L1085.8 732.4M325.0 983.6L1046.3 697.4M285.5 948.6L1006.9 662.5M246.1 913.7L967.4 627.5M206.6 878.7L928.0 592.6M167.2 843.8L888.5 557.6M127.7 808.8L849.1 522.7M48.8 738.9L770.1 452.8M9.4 704.0L730.7 417.8M-30.1 669.0L691.2 382.9M-69.5 634.1L651.8 347.9"/>
<path class="axr" d="M88.3 773.9L809.6 487.7"/>
<path class="axg" d="M814.5 870.3L333.2 443.9"/>
<path class="gedge" d="M388.1 1039.5 L1109.4 753.3 L628.1 326.9 L-93.2 613.1 Z"/>
<text class="glab" dy="2.900" transform="translate(-78.1 609.1) rotate(41.5)">350</text><text class="glab" dy="2.900" transform="translate(-19.2 585.7) rotate(41.5)">300</text><text class="glab" dy="2.900" transform="translate(39.8 562.3) rotate(41.5)">250</text><text class="glab" dy="2.900" transform="translate(98.8 538.9) rotate(41.5)">200</text><text class="glab" dy="2.900" transform="translate(157.8 515.5) rotate(41.5)">150</text><text class="glab" dy="2.900" transform="translate(216.8 492.1) rotate(41.5)">100</text><text class="glab" dy="2.900" transform="translate(275.7 468.7) rotate(41.5)">50</text><text class="glab" dy="2.900" transform="translate(334.7 445.3) rotate(41.5)">0</text><text class="glab" dy="2.900" transform="translate(393.7 421.9) rotate(41.5)">50</text><text class="glab" dy="2.900" transform="translate(452.7 398.5) rotate(41.5)">100</text><text class="glab" dy="2.900" transform="translate(511.7 375.1) rotate(41.5)">150</text><text class="glab" dy="2.900" transform="translate(570.6 351.7) rotate(41.5)">200</text><text class="glab" dy="2.900" text-anchor="end" transform="translate(365.0 1018.3) rotate(-21.6)">350</text><text class="glab" dy="2.900" text-anchor="end" transform="translate(325.6 983.3) rotate(-21.6)">300</text><text class="glab" dy="2.900" text-anchor="end" transform="translate(286.1 948.4) rotate(-21.6)">250</text><text class="glab" dy="2.900" text-anchor="end" transform="translate(246.7 913.4) rotate(-21.6)">200</text><text class="glab" dy="2.900" text-anchor="end" transform="translate(207.2 878.5) rotate(-21.6)">150</text><text class="glab" dy="2.900" text-anchor="end" transform="translate(167.8 843.5) rotate(-21.6)">100</text><text class="glab" dy="2.900" text-anchor="end" transform="translate(128.3 808.6) rotate(-21.6)">50</text><text class="glab" dy="2.900" text-anchor="end" transform="translate(88.9 773.6) rotate(-21.6)">0</text><text class="glab" dy="2.900" text-anchor="end" transform="translate(49.4 738.7) rotate(-21.6)">50</text><text class="glab" dy="2.900" text-anchor="end" transform="translate(10.0 703.7) rotate(-21.6)">100</text><text class="glab" dy="2.900" text-anchor="end" transform="translate(-29.5 668.8) rotate(-21.6)">150</text><text class="glab" dy="2.900" text-anchor="end" transform="translate(-68.9 633.8) rotate(-21.6)">200</text>
<defs>
<linearGradient id="bodyg" x1="420" x2="563" y1="0" y2="0" gradientUnits="userSpaceOnUse">
<stop offset="0" stop-color="#b5aa9d" stop-opacity=".72"/><stop offset=".045" stop-color="#c9beb7" stop-opacity=".62"/>
<stop offset=".2" stop-color="#d2c7c4" stop-opacity=".56"/><stop offset=".6" stop-color="#d6cbc9" stop-opacity=".54"/>
<stop offset=".955" stop-color="#c9beb7" stop-opacity=".62"/><stop offset="1" stop-color="#b5aa9d" stop-opacity=".72"/></linearGradient>
<clipPath id="bodyclip"><rect x="420.300" y="430" width="142.400" height="240"/></clipPath>
<filter id="blur4"><feGaussianBlur stdDeviation="5"/></filter>
<linearGradient id="wallg" x1="438" x2="545" y1="0" y2="0" gradientUnits="userSpaceOnUse">
<stop offset="0" stop-color="#2e2c26"/><stop offset=".05" stop-color="#6a6455"/><stop offset=".35" stop-color="#5a5446"/>
<stop offset=".7" stop-color="#4a4539"/><stop offset="1" stop-color="#37342c"/></linearGradient>
<linearGradient id="floorg" x1="440" x2="545" y1="0" y2="0" gradientUnits="userSpaceOnUse">
<stop offset="0" stop-color="#6a6354"/><stop offset=".5" stop-color="#5b5447"/><stop offset="1" stop-color="#4d473c"/></linearGradient>
<linearGradient id="strapg" x1="500" y1="405" x2="548" y2="445" gradientUnits="userSpaceOnUse">
<stop offset="0" stop-color="#8d8879"/><stop offset=".45" stop-color="#79746400"/><stop offset=".45" stop-color="#797464"/>
<stop offset=".8" stop-color="#676152"/><stop offset="1" stop-color="#4a463d"/></linearGradient>
<linearGradient id="sinng" x1="518" y1="458" x2="548" y2="484" gradientUnits="userSpaceOnUse">
<stop offset="0" stop-color="#2c2b29"/><stop offset=".45" stop-color="#3b3a37"/><stop offset=".8" stop-color="#56554f"/><stop offset="1" stop-color="#6c6b64"/></linearGradient>
<clipPath id="rimclip"><ellipse cx="491.5" cy="412.2" rx="53.4" ry="31.6"/></clipPath>
<filter id="blur1"><feGaussianBlur stdDeviation="0.7"/></filter>
<filter id="blur2"><feGaussianBlur stdDeviation="1.6"/></filter>
</defs>
<path d="M521.3 700.7L542 695.5L575.7 724L556.3 733.1Z" fill="#cfcfcf" filter="url(#blur2)"/>
<path fill="url(#bodyg)" d="M420.3 435L420.3 663.5A71.2 42.3 0 0 0 562.7 663.5L562.7 435A71.2 42.3 0 0 0 420.3 435Z"/>
<ellipse class="b" fill="#aeaaa8" fill-opacity=".55" stroke="#262626" stroke-width="1.2" cx="491.5" cy="663.5" rx="71.2" ry="42.3"/>
<ellipse class="s" fill="#ab9199" fill-opacity=".44" stroke="#3b3b3b" stroke-width=".8" cx="491.5" cy="435.0" rx="71.2" ry="42.3"/>
<g clip-path="url(#bodyclip)"><path d="M530 470L566 462L568 505L540 500Z" fill="#8f8783" opacity=".28" filter="url(#blur4)"/></g>
<path class="c" fill="url(#wallg)" stroke="#141414" stroke-width="1" d="M436.1 430.6L436.1 433.6A55.4 32.8 0 0 0 546.9 433.6L546.9 430.6A55.4 32.8 0 0 0 436.1 430.6Z"/>
<ellipse class="c" fill="#585243" stroke="#141414" stroke-width=".9" cx="491.5" cy="430.6" rx="55.4" ry="32.8"/>
<path class="c" fill="url(#wallg)" stroke="#141414" stroke-width="1.1" d="M438.1 412.2L438.1 429.6A53.4 31.7 0 0 0 544.9 429.6L544.9 412.2A53.4 31.7 0 0 0 438.1 412.2Z"/>
<ellipse class="c" fill="#3a3936" stroke="#141414" stroke-width="1.2" cx="491.5" cy="412.2" rx="53.4" ry="31.7"/>
<g clip-path="url(#rimclip)"><path fill="url(#floorg)" filter="url(#blur1)" d="M434.0 424.0C434.8 423.1 437.0 420.3 439.0 418.3C441.0 416.3 443.4 413.6 446.0 411.8C448.6 410.0 451.4 408.5 454.4 407.4C457.4 406.3 460.7 405.6 464.0 405.0C467.3 404.4 469.7 403.9 474.0 403.5C478.3 403.1 484.0 402.6 490.0 402.7C496.0 402.8 503.3 403.0 510.0 404.2C516.7 405.4 523.7 407.2 530.0 410.0C536.3 412.8 545.0 419.2 548.0 421.0L550 450L430 450Z"/></g>
<ellipse class="c" fill="none" stroke="#141414" stroke-width="1.3" cx="491.5" cy="412.2" rx="53.4" ry="31.7"/>
<path fill="#5d5648" stroke="#111" stroke-width="1" d="M473.4 409.1A16.4 11.2 0 0 0 500.5 417.6L501.3 420.0A16.4 11.2 0 0 1 473.4 411.4Z"/>
<ellipse cx="489.8" cy="409.1" rx="16.4" ry="11.2" fill="none" stroke="#111" stroke-width="1.100"/>
<path fill="#625c4e" stroke="#111" stroke-width="1" stroke-linejoin="round" d="M486.0 409.6C485.3 409.8 483.1 410.2 482.0 410.6C480.9 411.0 479.6 411.6 479.4 412.2C479.2 412.8 480.4 413.8 481.0 414.4C481.6 415.0 482.4 415.9 483.2 416.0C483.9 416.1 484.3 415.2 485.5 415.1C486.7 415.0 488.5 414.7 490.2 415.1C491.9 415.6 493.9 416.9 495.5 417.8C497.1 418.7 499.3 420.2 500.1 420.7L494 411Z"/>
<path fill="none" stroke="#111" stroke-width=".9" d="M484.3 416.8C485.3 417.0 488.1 417.3 490.2 417.9C492.2 418.5 495.5 419.9 496.6 420.3"/>
<path fill="#2a2a28" stroke="#141414" stroke-width="1.100" stroke-linejoin="round" d="M535.4 414.8C537.1 416.8 542.5 423.5 545.8 427.0C549.1 430.5 551.9 433.1 555.0 436.0C558.1 438.9 561.4 441.4 564.4 444.7C567.4 448.0 570.8 452.0 573.0 455.6C575.2 459.2 576.7 463.6 577.7 466.6C578.7 469.6 578.8 471.7 578.8 473.6C578.8 475.6 578.8 477.0 578.0 478.3C577.2 479.6 576.1 480.2 573.8 481.4C571.4 482.6 566.6 484.1 563.6 485.3C560.6 486.5 557.8 487.6 555.8 488.4C553.8 489.2 553.3 489.9 551.9 490.2C550.5 490.5 549.3 490.6 547.2 490.0C545.1 489.4 542.1 488.3 539.4 486.9C536.7 485.5 533.9 483.6 530.8 481.4C527.7 479.2 523.9 476.5 520.6 473.6C517.3 470.7 512.5 465.4 510.9 463.8L531.600 456L538.600 452Z"/>
<path fill="url(#sinng)" d="M537.8 456.4C539.1 458.0 543.6 462.7 545.6 465.8C547.6 468.9 548.7 472.5 549.5 475.2C550.3 477.9 550.7 480.5 550.3 482.2C549.9 483.9 549.0 484.9 547.2 485.3C545.4 485.7 542.5 485.8 539.4 484.5C536.3 483.2 532.4 480.5 528.4 477.5C524.4 474.5 518.0 468.9 515.2 466.6C512.4 464.3 512.2 464.1 511.6 463.6L531.600 456.200Z"/>
<path fill="url(#soutg)" stroke="#141414" stroke-width="1" stroke-linejoin="round" d="M535.4 414.8C537.1 416.8 542.5 423.5 545.8 427.0C549.1 430.5 551.9 433.1 555.0 436.0C558.1 438.9 561.4 441.4 564.4 444.7C567.4 448.0 570.8 452.0 573.0 455.6C575.2 459.2 576.7 463.6 577.7 466.6C578.7 469.6 578.8 471.7 578.8 473.6C578.8 475.6 578.8 477.0 578.0 478.3C577.2 479.6 576.1 480.2 573.8 481.4C571.4 482.6 566.6 484.1 563.6 485.3C560.6 486.5 557.1 487.9 555.8 488.4L555.8 488.4C555.7 488.1 555.3 487.7 555.0 486.9C554.7 486.1 554.3 485.3 553.8 483.8C553.3 482.2 552.7 479.8 551.9 477.5C551.1 475.2 550.3 472.8 548.8 469.7C547.2 466.6 544.2 461.7 542.5 458.8C540.8 455.8 539.2 453.1 538.6 452.0Z"/>
<defs><linearGradient id="soutg" x1="548" y1="440" x2="572" y2="488" gradientUnits="userSpaceOnUse">
<stop offset="0" stop-color="#393937"/><stop offset=".55" stop-color="#3f3f3c"/><stop offset=".85" stop-color="#4b4a46"/><stop offset="1" stop-color="#3a3a37"/></linearGradient></defs>
<path fill="url(#strapg2)" d="M485.2 409.6C486.8 408.9 491.6 406.9 495.0 405.6C498.4 404.3 502.3 402.2 505.4 401.7C508.4 401.2 510.5 401.8 513.3 402.4C516.1 403.0 518.7 403.5 522.4 405.6C526.1 407.7 531.5 411.2 535.4 414.8C539.3 418.4 544.1 425.0 545.8 427.0C546.0 429.1 547.7 434.6 547.3 437.8C546.9 441.1 545.0 444.5 543.6 446.9C542.2 449.3 539.4 451.1 538.6 452.0C535.9 449.4 527.2 441.0 522.4 436.6C517.6 432.2 513.5 428.5 510.0 425.6C506.5 422.7 503.7 421.0 501.3 419.3C498.9 417.6 497.4 416.6 495.5 415.4C493.6 414.2 491.9 413.2 490.2 412.2C488.5 411.2 486.0 410.0 485.2 409.6Z"/>
<path fill="none" stroke="#141414" stroke-width="1.1" d="M505.4 401.7C506.7 401.8 510.5 401.8 513.3 402.4C516.1 403.0 518.7 403.5 522.4 405.6C526.1 407.7 531.5 411.2 535.4 414.8C539.3 418.4 544.1 425.0 545.8 427.0"/>
<path fill="none" stroke="#aeab9e" stroke-width="1.100" stroke-linecap="round" filter="url(#blur1)" d="M486.200 409.900L505 402.700"/>
<path fill="none" stroke="#141414" stroke-width="1.1" d="M538.6 452.0C535.9 449.4 527.2 441.0 522.4 436.6C517.6 432.2 513.5 428.5 510.0 425.6C506.5 422.7 503.7 421.0 501.3 419.3C498.9 417.6 497.4 416.6 495.5 415.4C493.6 414.2 491.9 413.2 490.2 412.2C488.5 411.2 486.0 410.0 485.2 409.6"/>
<path fill="none" stroke="#141414" stroke-width=".8" d="M537.4 453.6C534.7 451.0 526.0 442.6 521.2 438.2C516.4 433.8 512.3 430.1 508.8 427.2C505.3 424.3 501.6 422.0 500.1 420.9"/>
<defs><linearGradient id="strapg2" x1="492" y1="400" x2="546" y2="447" gradientUnits="userSpaceOnUse">
<stop offset="0" stop-color="#979282"/><stop offset=".12" stop-color="#857f6e"/><stop offset=".3" stop-color="#7a7564"/><stop offset=".62" stop-color="#6b6556"/>
<stop offset=".8" stop-color="#5a5549"/><stop offset=".93" stop-color="#403e39"/><stop offset="1" stop-color="#393937"/></linearGradient></defs>
<ellipse cx="514.3" cy="605" rx="5.900" ry="3.700" fill="#fff" fill-opacity=".5" stroke="#a5a1a0" stroke-width="2.200"/>
<rect x="0" y="147" width="1024" height="4.200" fill="#f9f9f9"/>
<rect x="2.700" y="154.500" width="17.700" height="202" fill="#f0f0f0"/>
<path d="M8 161L11 163.200L8 165.400ZM11 161L14 163.200L11 165.400Z" fill="#333"/>
<text transform="translate(8.300 170) rotate(90)" textLength="36" lengthAdjust="spacingAndGlyphs" font-size="7.400" fill="#444">BROWSER</text>
<text transform="translate(8.300 255) rotate(90)" textLength="43.500" lengthAdjust="spacingAndGlyphs" font-size="7.400" fill="#444">COMMENTS</text>
<defs><filter id="vcb"><feGaussianBlur stdDeviation="2.400"/></filter><filter id="vct"><feGaussianBlur stdDeviation=".35"/></filter></defs>
<path d="M960 220L975 241L1006 226L992 210Z" fill="#c4c4c4" filter="url(#vcb)" opacity=".85"/>
<path d="M980.2 172.8L1001.9 187.7L969.1 200.6L948.8 182.7Z" fill="#ededed"/>
<path d="M948.8 182.7L969.1 200.6L969.1 231.5L951.9 211.7Z" fill="#e3e3e3"/>
<path d="M969.1 200.6L1001.9 187.7L999.4 217.3L969.1 231.5Z" fill="#ebebeb"/>
<path d="M980.2 172.8L1001.9 187.7L999.4 217.3L969.1 231.5L951.9 211.7L948.8 182.7Z M948.8 182.7L969.1 200.6M1001.9 187.7L969.1 200.6M969.1 200.6L969.1 231.5" fill="none" stroke="#858585" stroke-width=".9" stroke-dasharray="3.200 1.500"/>
<path d="M965.500 197.500L969.500 195.500L974.500 198.500L974 203.500L969.100 206L965 203Z" fill="#dfe3ee" opacity=".8"/>
<g filter="url(#vct)" font-weight="700" fill="#9a9ca3">
<text transform="matrix(-.95 -.25 .62 -.42 985.500 186.300)" font-size="7.400" textLength="15.500" lengthAdjust="spacingAndGlyphs">TOP</text>
<text transform="matrix(.92 -.36 0 1 977 216)" font-size="6.600" textLength="18.500" lengthAdjust="spacingAndGlyphs">BACK</text>
<text transform="matrix(.78 .52 0 1 953.300 204)" font-size="6.600" textLength="14.500" lengthAdjust="spacingAndGlyphs">RIGHT</text>
</g>
<path d="M980.200 166.500V172.800" stroke="#6f6fe6" stroke-width="1.600"/><text x="976.300" y="165.800" font-size="11" fill="#7d7df0">Z</text>
<path d="M947.500 213.300L952 211.700" stroke="#e86a6a" stroke-width="1.600"/><text x="938.700" y="219.500" font-size="10.500" fill="#f08585">X</text>
<path d="M999.400 217.500L1004.500 221" stroke="#7fe07f" stroke-width="1.600"/><text x="1003.300" y="227.500" font-size="10.500" fill="#8fe88f">Y</text>
<rect x="420.250" y="749.500" width="182.250" height="18.300" fill="#f1f1f1" fill-opacity=".96"/>
<rect x="420.250" y="749.500" width="25.350" height="18.300" fill="#3c8fd3"/>
<path d="M429.600 752V765.500" stroke="#3a3a3a" stroke-width="1.600"/><path d="M427.600 753.800L429.600 751L431.600 753.800Z" fill="#3a3a3a"/>
<path d="M433.500 757C435.500 758.500 434.500 760.800 429.600 761.200C425.500 761.500 422.800 760.300 423.300 758.600" fill="none" stroke="#3a3a3a" stroke-width="1.300"/><path d="M423 760.500L426.500 759.500L425 763Z" fill="#222"/>
<path d="M423.500 757.800C425 756.300 432 756 434 757.500" fill="none" stroke="#c9d9ea" stroke-width="1"/>
<path d="M439.0 757.2H443.6L441.3 760.2Z" fill="#fff"/>
<rect x="448.700" y="756" width="11.700" height="8.300" rx=".8" fill="#f1f1f1" stroke="#4a4a4a" stroke-width="1.200"/><rect x="451" y="759" width="7" height="3" fill="#bbb" stroke="#555" stroke-width=".7"/>
<path d="M450.300 755.500L452 753.300L453.600 755.500M455.500 755.500L457.200 753.300L458.800 755.500" fill="none" stroke="#555" stroke-width=".9"/>
<path d="M471.300 764.300C469.800 762.500 468.800 760.500 468.400 759.300C468.700 758.300 470 758.500 470.500 759.500L471.300 760.500V754.800C471.300 753.600 472.900 753.600 472.900 754.800V753.700C472.900 752.500 474.600 752.500 474.600 753.700V754.200C474.600 753 476.300 753 476.300 754.200V755.200C476.300 754.100 477.900 754.100 477.900 755.200V760.500C477.900 762.500 477.300 763.500 476.500 764.300Z" fill="#fafafa" stroke="#3a3a3a" stroke-width=".9" stroke-linejoin="round"/><path d="M472.900 755V758.500M474.600 754.500V758.500M476.300 755.500V758.500" stroke="#3a3a3a" stroke-width=".7"/>
<circle cx="492.200" cy="757.500" r="3.500" fill="#e9eef2" stroke="#3a3a3a" stroke-width="1.200"/><path d="M494.800 760.300L497.600 763.400" stroke="#3a3a3a" stroke-width="1.900"/><path d="M497.300 753.300H500.300M498.800 751.800V754.800M497.300 756.600H500.300" stroke="#3a3a3a" stroke-width=".9"/>
<rect x="508.300" y="752.300" width="11.400" height="11.500" fill="none" stroke="#555" stroke-width=".9" stroke-dasharray="1.500 1.200"/><circle cx="513.300" cy="757.500" r="4.600" fill="#e9eef2" stroke="#3a3a3a" stroke-width="1.200"/><path d="M516.600 761.100L520.300 764.800" stroke="#3a3a3a" stroke-width="2"/>
<path d="M524.0 757.2H528.6L526.3 760.2Z" fill="#333"/>
<rect x="534" y="752.700" width="11.600" height="8.600" rx=".8" fill="#8fb4e6" stroke="#4a4a4a" stroke-width="1.300"/><path d="M538 763.800H541.800M537 764.600H542.800" stroke="#4a4a4a" stroke-width="1.100"/><rect x="538.800" y="761.500" width="2.200" height="2.300" fill="#777"/>
<path d="M547.4 757.2H552.0L549.7 760.2Z" fill="#333"/>
<rect x="557.800" y="752.600" width="12.200" height="12" fill="#c9c9c9" stroke="#555" stroke-width=".9"/><path d="M560.200 752.600V764.600M562.700 752.600V764.600M565.100 752.600V764.600M567.600 752.600V764.600M557.800 755V755H570M557.800 757.400H570M557.800 759.800H570M557.800 762.200H570" stroke="#555" stroke-width=".8"/>
<path d="M571.5 757.2H576.1L573.8 760.2Z" fill="#333"/>
<rect x="581.200" y="753.200" width="11.300" height="10.700" rx=".6" fill="#8ea5d2" stroke="#3f4a66" stroke-width="1.100"/><path d="M586.850 753.200V763.900M581.200 758.500H592.500" stroke="#3f4a66" stroke-width="1"/>
<path d="M595.3 757.2H599.9L597.6 760.2Z" fill="#333"/>
</svg>
</div>
<svg class="abs" style="left:0;top:771px;font-family:'Liberation Sans',sans-serif" width="1024" height="39" viewBox="0 771 1024 39">
<rect x="0" y="771" width="1024" height="39" fill="#f0f0f0"/>
<rect x="0" y="771" width="1024" height="3.400" fill="#cacaca"/><rect x="0" y="774" width="102.500" height="1" fill="#d4d4d4"/>
<rect x="0" y="808.400" width="1024" height="1.600" fill="#bdbdbd"/>
<path d="M8.200 788H9.900V799.300H8.200ZM18 788V799.300L9.900 793.650Z" fill="#444"/>
<path d="M35 789V798.300L27 793.650ZM35.300 791.500H37V795.800H35.300Z" fill="#444"/>
<path d="M46.900 787.200V799.800L56.300 793.500Z" fill="#444"/>
<path d="M67.400 789V798.300L75.400 793.650ZM65.400 791.500H67.100V795.800H65.400Z" fill="#444"/>
<path d="M93 788H94.700V799.300H93ZM85.500 788V799.300L93 793.650Z" fill="#444"/>
<path d="M119.500 805.200H322.600M119.4 805.200V801.300M137.4 805.200V801.300M155.9 805.200V801.300M174.5 805.200V801.300M193.0 805.200V801.300M211.5 805.200V801.300M229.9 805.200V801.300M248.0 805.200V801.300M266.5 805.200V801.300M285.1 805.200V801.300M303.7 805.200V801.300M321.9 805.200V801.300" fill="none" stroke="#bdbdbd" stroke-width="1"/>
<rect x="113.7" y="787.700" width="9.800" height="9.600" fill="none" stroke="#8a8a8a" stroke-width=".9" stroke-dasharray="2.200 1.200"/>
<rect x="112.9" y="786.9" width="1.600" height="1.600" fill="#3b8fe0"/>
<rect x="122.7" y="786.9" width="1.600" height="1.600" fill="#3b8fe0"/>
<rect x="112.9" y="796.5" width="1.600" height="1.600" fill="#3b8fe0"/>
<path d="M120.1 796.200L123.5 792.800L125.2 794.500L121.8 797.900Z" fill="#f0b43c"/>
<path d="M123.5 792.800L124.3 792L126.0 793.700L125.2 794.500Z" fill="#e8504a"/>
<path d="M120.1 796.200L121.8 797.900L119.2 798.900Z" fill="#6a6a6a"/>
<path d="M130.9 796.500H138.5L140.9 794.500V796L138.5 798.600H130.9Z" fill="#c4c4c4"/>
<path d="M130.9 789.200L133.3 787H140.9L138.5 789.200Z" fill="#97c9f5"/>
<path d="M138.5 789.200L140.9 787V794.500L138.5 796.500Z" fill="#5792cb"/>
<rect x="130.9" y="789.200" width="7.600" height="7.300" fill="#79afe1"/>
<path d="M142.2 788.500V796.500" stroke="#333" stroke-width=".9"/><path d="M141.2 789.300L142.2 787L143.2 789.300Z" fill="#333"/>
<path d="M149.4 796.500H157.0L159.4 794.500V796L157.0 798.600H149.4Z" fill="#c4c4c4"/>
<path d="M149.4 789.200L151.8 787H159.4L157.0 789.200Z" fill="#97c9f5"/>
<path d="M157.0 789.200L159.4 787V794.500L157.0 796.500Z" fill="#5792cb"/>
<rect x="149.4" y="789.200" width="7.600" height="7.300" fill="#79afe1"/>
<path d="M160.7 788.500V796.500" stroke="#333" stroke-width=".9"/><path d="M159.7 789.300L160.7 787L161.7 789.300Z" fill="#333"/>
<path d="M168.0 796.500H175.6L178.0 794.500V796L175.6 798.600H168.0Z" fill="#c4c4c4"/>
<path d="M168.0 789.200L170.4 787H178.0L175.6 789.200Z" fill="#97c9f5"/>
<path d="M175.6 789.200L178.0 787V794.500L175.6 796.500Z" fill="#5792cb"/>
<rect x="168.0" y="789.200" width="7.600" height="7.300" fill="#79afe1"/>
<path d="M179.3 788.500V796.500" stroke="#333" stroke-width=".9"/><path d="M178.3 789.300L179.3 787L180.3 789.300Z" fill="#333"/>
<path d="M186.5 796.500H194.1L196.5 794.500V796L194.1 798.600H186.5Z" fill="#c4c4c4"/>
<path d="M186.5 789.200L188.9 787H196.5L194.1 789.200Z" fill="#97c9f5"/>
<path d="M194.1 789.200L196.5 787V794.500L194.1 796.500Z" fill="#5792cb"/>
<rect x="186.5" y="789.200" width="7.600" height="7.300" fill="#79afe1"/>
<path d="M197.8 788.500V796.500" stroke="#333" stroke-width=".9"/><path d="M196.8 789.300L197.8 787L198.8 789.300Z" fill="#333"/>
<rect x="205.8" y="787.700" width="9.800" height="9.600" fill="none" stroke="#8a8a8a" stroke-width=".9" stroke-dasharray="2.200 1.200"/>
<rect x="205.0" y="786.9" width="1.600" height="1.600" fill="#3b8fe0"/>
<rect x="214.8" y="786.9" width="1.600" height="1.600" fill="#3b8fe0"/>
<rect x="205.0" y="796.5" width="1.600" height="1.600" fill="#3b8fe0"/>
<path d="M212.2 796.200L215.6 792.800L217.3 794.500L213.9 797.900Z" fill="#f0b43c"/>
<path d="M215.6 792.800L216.4 792L218.1 793.700L217.3 794.500Z" fill="#e8504a"/>
<path d="M212.2 796.200L213.9 797.900L211.3 798.900Z" fill="#6a6a6a"/>
<rect x="224.2" y="787.700" width="9.800" height="9.600" fill="none" stroke="#8a8a8a" stroke-width=".9" stroke-dasharray="2.200 1.200"/>
<rect x="223.4" y="786.9" width="1.600" height="1.600" fill="#3b8fe0"/>
<rect x="233.2" y="786.9" width="1.600" height="1.600" fill="#3b8fe0"/>
<rect x="223.4" y="796.5" width="1.600" height="1.600" fill="#3b8fe0"/>
<path d="M230.6 796.200L234.0 792.800L235.7 794.500L232.3 797.900Z" fill="#f0b43c"/>
<path d="M234.0 792.800L234.8 792L236.5 793.700L235.7 794.500Z" fill="#e8504a"/>
<path d="M230.6 796.200L232.3 797.900L229.7 798.900Z" fill="#6a6a6a"/>
<path d="M241.5 796.500H249.1L251.5 794.500V796L249.1 798.600H241.5Z" fill="#c4c4c4"/>
<path d="M241.5 789.200L243.9 787H251.5L249.1 789.200Z" fill="#97c9f5"/>
<path d="M249.1 789.200L251.5 787V794.500L249.1 796.500Z" fill="#5792cb"/>
<rect x="241.5" y="789.200" width="7.600" height="7.300" fill="#79afe1"/>
<path d="M252.8 788.500V796.500" stroke="#333" stroke-width=".9"/><path d="M251.8 789.300L252.8 787L253.8 789.300Z" fill="#333"/>
<rect x="260.8" y="787.700" width="9.800" height="9.600" fill="none" stroke="#8a8a8a" stroke-width=".9" stroke-dasharray="2.200 1.200"/>
<rect x="260.0" y="786.9" width="1.600" height="1.600" fill="#3b8fe0"/>
<rect x="269.8" y="786.9" width="1.600" height="1.600" fill="#3b8fe0"/>
<rect x="260.0" y="796.5" width="1.600" height="1.600" fill="#3b8fe0"/>
<path d="M267.2 796.200L270.6 792.800L272.3 794.500L268.9 797.900Z" fill="#f0b43c"/>
<path d="M270.6 792.800L271.4 792L273.1 793.700L272.3 794.500Z" fill="#e8504a"/>
<path d="M267.2 796.200L268.9 797.900L266.3 798.900Z" fill="#6a6a6a"/>
<rect x="279.4" y="787.700" width="9.800" height="9.600" fill="none" stroke="#8a8a8a" stroke-width=".9" stroke-dasharray="2.200 1.200"/>
<rect x="278.6" y="786.9" width="1.600" height="1.600" fill="#3b8fe0"/>
<rect x="288.4" y="786.9" width="1.600" height="1.600" fill="#3b8fe0"/>
<rect x="278.6" y="796.5" width="1.600" height="1.600" fill="#3b8fe0"/>
<path d="M285.8 796.200L289.2 792.800L290.9 794.500L287.5 797.900Z" fill="#f0b43c"/>
<path d="M289.2 792.800L290.0 792L291.7 793.700L290.9 794.500Z" fill="#e8504a"/>
<path d="M285.8 796.200L287.5 797.900L284.9 798.900Z" fill="#6a6a6a"/>
<path d="M297.2 796.500H304.8L307.2 794.500V796L304.8 798.600H297.2Z" fill="#c4c4c4"/>
<path d="M297.2 789.200L299.6 787H307.2L304.8 789.200Z" fill="#97c9f5"/>
<path d="M304.8 789.200L307.2 787V794.500L304.8 796.500Z" fill="#5792cb"/>
<rect x="297.2" y="789.200" width="7.600" height="7.300" fill="#79afe1"/>
<path d="M308.5 788.500V796.500" stroke="#333" stroke-width=".9"/><path d="M307.5 789.300L308.5 787L309.5 789.300Z" fill="#333"/>
<path d="M315.4 796.500H323.0L325.4 794.500V796L323.0 798.600H315.4Z" fill="#c4c4c4"/>
<path d="M315.4 789.200L317.8 787H325.4L323.0 789.200Z" fill="#97c9f5"/>
<path d="M323.0 789.200L325.4 787V794.500L323.0 796.500Z" fill="#5792cb"/>
<rect x="315.4" y="789.200" width="7.600" height="7.300" fill="#79afe1"/>
<path d="M326.7 788.500V796.500" stroke="#333" stroke-width=".9"/><path d="M325.7 789.300L326.7 787L327.7 789.300Z" fill="#333"/>
<path d="M326.900 781.700H336.250V783.200L332.100 786.800H331L326.900 783.200Z" fill="#4a4a4a"/><rect x="330.800" y="786" width="1.300" height="20.700" fill="#4a4a4a"/>
<path d="M1013.0 793.7L1013.0 794.9L1011.3 795.5L1011.0 796.3L1011.7 797.9L1010.9 798.7L1009.3 798.0L1008.5 798.3L1007.9 800.0L1006.7 800.0L1006.1 798.3L1005.3 798.0L1003.7 798.7L1002.9 797.9L1003.6 796.3L1003.3 795.5L1001.6 794.9L1001.6 793.7L1003.3 793.1L1003.6 792.3L1002.9 790.7L1003.7 789.9L1005.3 790.6L1006.1 790.3L1006.7 788.6L1007.9 788.6L1008.5 790.3L1009.3 790.6L1010.9 789.9L1011.7 790.7L1011.0 792.3L1011.3 793.1Z" fill="#7a7a7a"/><circle cx="1007.300" cy="794.300" r="1.900" fill="#f0f0f0"/>
</svg>
</body></html>
